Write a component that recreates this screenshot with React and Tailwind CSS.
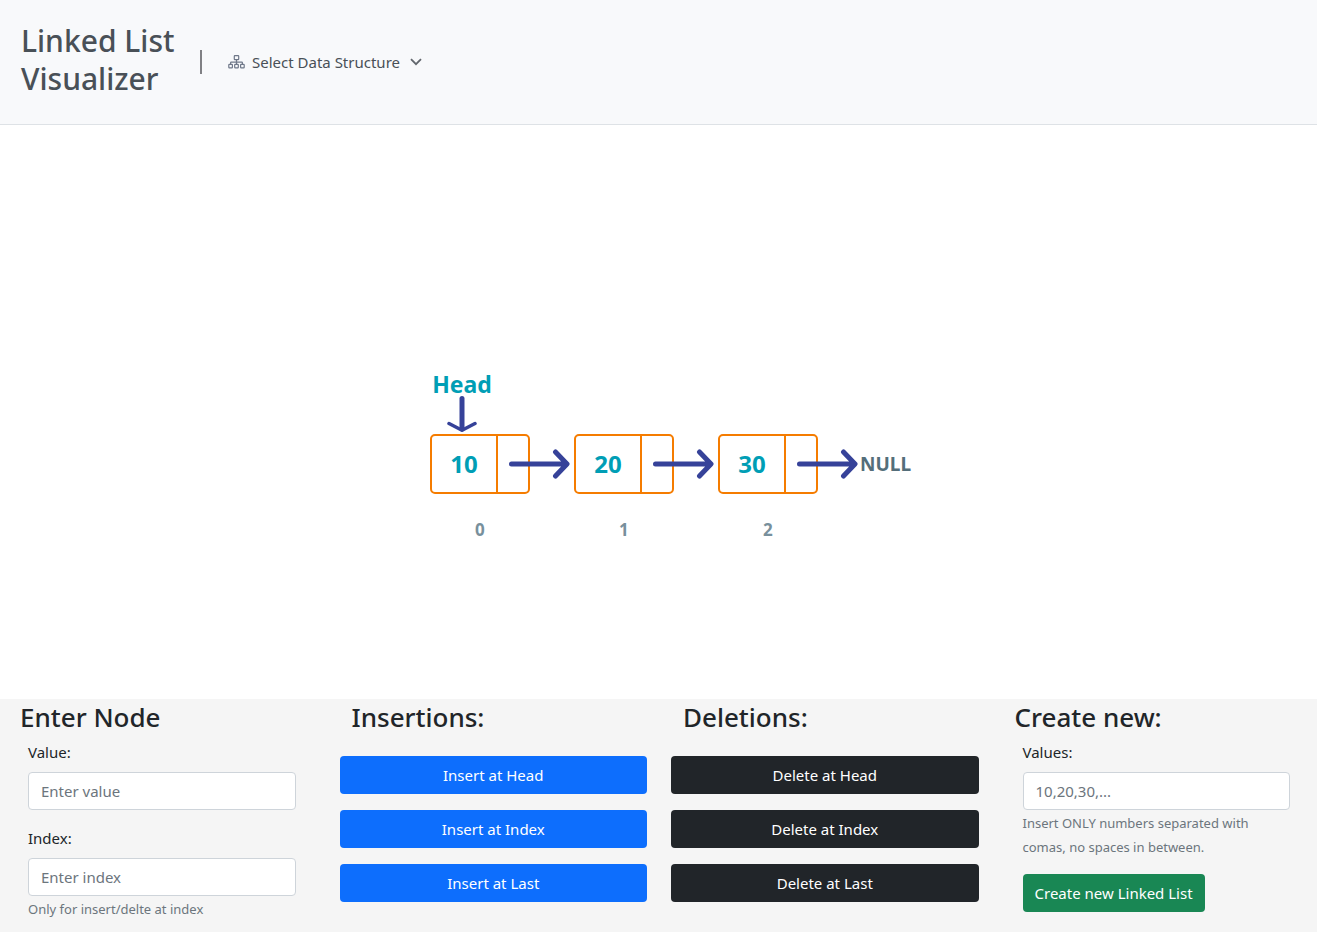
import React from "react";

const nodes = [10, 20, 30];

function HierarchyIcon() {
  return (
    <svg
      className="pointer-events-none absolute left-0 h-4 w-[17px]"
      viewBox="0 0 17 16"
      fill="none"
      stroke="#6f7889"
      strokeWidth="1.2"
      aria-hidden="true"
    >
      <rect x="6.300" y="1.600" width="4.400" height="4" rx="0.6" />
      <path d="M8.500 5.600V10M2.600 10V8.700Q2.600 8.100 3.200 8.100H13.800Q14.400 8.100 14.400 8.700V10" />
      <rect x="0.8" y="10.300" width="3.600" height="3.500" rx="0.6" />
      <rect x="6.700" y="10.300" width="3.600" height="3.500" rx="0.6" />
      <rect x="12.600" y="10.300" width="3.600" height="3.500" rx="0.6" />
    </svg>
  );
}

function PointerArrow() {
  return (
    <svg
      className="absolute top-[15px] left-[78px] z-10 h-[30px] w-[62px]"
      viewBox="0 0 62 30"
      fill="none"
      stroke="#364299"
      strokeWidth="5"
      strokeLinecap="round"
      strokeLinejoin="round"
      aria-hidden="true"
    >
      <path d="M3.500 15H58M47.500 3L59 15L47.500 27" />
    </svg>
  );
}

function HeadMarker() {
  return (
    <div className="absolute bottom-full left-0 flex w-16 flex-col items-center">
      <span className="text-[23px] leading-6 font-bold text-[#009eb5]">Head</span>
      <svg
        className="h-[38px] w-[30px]"
        viewBox="0 0 30 38"
        fill="none"
        stroke="#364299"
        strokeLinecap="round"
        strokeLinejoin="round"
        aria-hidden="true"
      >
        <path d="M15 2.500V33" strokeWidth="5" />
        <path d="M2 27.500L15 34.200L28 27.500" strokeWidth="3.500" />
      </svg>
    </div>
  );
}

function ListNode({ value, index }) {
  return (
    <li className="flex flex-col items-center">
      <div className="relative flex h-[60px] w-[100px]">
        {index === 0 && <HeadMarker />}
        <div className="flex flex-1 rounded-[5px] border-2 border-[#f57c00]">
          <span className="flex flex-1 items-center justify-center text-[24px] font-bold text-[#009eb5]">
            {value}
          </span>
          <span className="w-8 border-l-2 border-[#f57c00]" />
        </div>
        <PointerArrow />
      </div>
      <span className="mt-6 text-[17px] leading-6 font-bold text-[#78909c]">{index}</span>
    </li>
  );
}

function Field({ id, label, placeholder, hint }) {
  return (
    <div>
      <label htmlFor={id} className="mb-2 block text-[15px] leading-6">
        {label}
      </label>
      <input
        id={id}
        type="text"
        placeholder={placeholder}
        className="block h-[38px] w-full rounded border border-[#ced4da] bg-white px-3 text-[15px] placeholder:text-[#6c757d]"
      />
      {hint && <p className="mt-px text-[13px] leading-6 text-[#6c757d]">{hint}</p>}
    </div>
  );
}

function Panel({ title, children }) {
  return (
    <section>
      <h2 className="pl-3 text-[26px] leading-9 font-medium">{title}</h2>
      {children}
    </section>
  );
}

function ActionList({ actions, color }) {
  return (
    <div className="mt-[21px] flex flex-col gap-4">
      {actions.map((action) => (
        <button
          key={action}
          type="button"
          className={"h-[38px] rounded text-[15px] text-white " + color}
        >
          {action}
        </button>
      ))}
    </div>
  );
}

export default function App() {
  return (
    <div className="flex min-h-screen flex-col bg-white font-['Noto_Sans','Open_Sans',sans-serif] text-[#212529]">
      <header className="flex items-center border-b border-[#dee2e6] bg-[#f8f9fb] px-[21px] pt-[22px] pb-[26px]">
        <h1 className="w-[179px] text-[30px] leading-[38px] font-medium text-[#495057]">
          Linked List
          <br />
          Visualizer
        </h1>
        <span className="mt-1 h-6 w-0.5 bg-[#808084]" />
        <div className="relative mt-1 ml-[26px] flex items-center">
          <HierarchyIcon />
          <select
            aria-label="Select Data Structure"
            className="appearance-none bg-transparent pr-[22px] pl-6 text-[15px] leading-6 text-[#495057]"
          >
            <option>Select Data Structure</option>
          </select>
          <svg
            className="pointer-events-none absolute right-0 h-2 w-3"
            viewBox="0 0 12 8"
            fill="none"
            stroke="#62676d"
            strokeWidth="1.8"
            aria-hidden="true"
          >
            <path d="M1 1.200L6 6.200L11 1.200" />
          </svg>
        </div>
      </header>

      <main className="flex flex-1 items-center justify-center pt-[152px] pl-6">
        <ol className="flex gap-11">
          {nodes.map((value, index) => (
            <ListNode key={value} value={value} index={index} />
          ))}
          <li className="-ml-0.5 h-[60px] text-[19px] leading-[61px] font-bold text-[#546e7a]">NULL</li>
        </ol>
      </main>

      <footer className="grid grid-cols-4 gap-6 bg-[#f5f5f5] pr-[7px] pb-5 pl-2">
        <Panel title="Enter Node">
          <div className="mt-[5px] flex flex-col gap-4 px-5">
            <Field id="node-value" label="Value:" placeholder="Enter value" />
            <div className="-mb-4">
              <Field
                id="node-index"
                label="Index:"
                placeholder="Enter index"
                hint="Only for insert/delte at index"
              />
            </div>
          </div>
        </Panel>
        <Panel title="Insertions:">
          <ActionList
            color="bg-[#0d6efd]"
            actions={["Insert at Head", "Insert at Index", "Insert at Last"]}
          />
        </Panel>
        <Panel title="Deletions:">
          <ActionList
            color="bg-[#212529]"
            actions={["Delete at Head", "Delete at Index", "Delete at Last"]}
          />
        </Panel>
        <Panel title="Create new:">
          <div className="mt-[5px] px-5">
            <Field
              id="list-values"
              label="Values:"
              placeholder="10,20,30,..."
              hint="Insert ONLY numbers separated with comas, no spaces in between."
            />
            <button type="button" className="mt-[15px] h-[38px] rounded bg-[#198754] px-3 text-[15px] text-white">
              Create new Linked List
            </button>
          </div>
        </Panel>
      </footer>
    </div>
  );
}
